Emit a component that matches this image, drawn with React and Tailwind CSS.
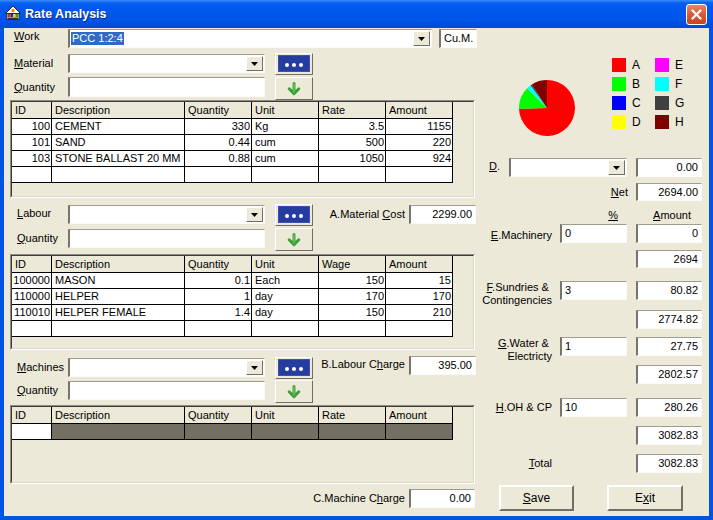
import React from "react";

const sunk =
  "bg-white border-t border-l-2 border-r border-b border-t-[#9f9d92] border-l-[#76746b] border-r-[#fbfbf8] border-b-[#fbfbf8]";
const raised =
  "bg-[#ECE9D8] border border-t-white border-l-white border-r-[#716f64] border-b-[#716f64]";

function U({ children }) {
  return <span className="underline underline-offset-[1px] decoration-1">{children}</span>;
}

function DropBtn() {
  return (
    <div className={`${raised} w-[17px] h-[15px] flex items-center justify-center shrink-0`}>
      <svg width="7" height="4" viewBox="0 0 7 4">
        <path d="M0 0h7L3.5 4z" fill="#000" />
      </svg>
    </div>
  );
}

function DotsBtn() {
  return (
    <div className={`${raised} w-[38px] h-[22px] flex items-center justify-center shrink-0`}>
      <div className="w-[32px] h-[17px] bg-[#263c9f] border border-[#3a52b8] flex items-center justify-center gap-[3px] pt-[3px]">
        <div className="w-[4px] h-[4px] rounded-full bg-white" />
        <div className="w-[4px] h-[4px] rounded-full bg-white" />
        <div className="w-[4px] h-[4px] rounded-full bg-white" />
      </div>
    </div>
  );
}

function ArrowBtn() {
  return (
    <div className={`${raised} w-[38px] h-[23px] flex items-center justify-center shrink-0`}>
      <svg width="14" height="14" viewBox="0 0 14 14">
        <path d="M7 1.5V11.5M2.2 6.8L7 11.6L11.8 6.8" fill="none" stroke="#3f9f3a" strokeWidth="3" strokeLinecap="round" strokeLinejoin="round" />
        <path d="M7 2V10" fill="none" stroke="#7ccf6f" strokeWidth="1" strokeLinecap="round" />
      </svg>
    </div>
  );
}

const COLS = "grid grid-cols-[40px_133px_67px_67px_67px_67px] w-[441px]";

function Grid({ headers, rows, boxH, dark }) {
  return (
    <div className={`ml-[6px] w-[465px] ${boxH} border border-t-[#8d8b82] border-l-[#8d8b82] border-r-white border-b-white`}>
      <div className="w-full h-full border border-t-[#3c3c3c] border-l-[#3c3c3c] border-r-[#dcd9cc] border-b-[#dcd9cc]">
        <div className={COLS}>
          {headers.map((h) => (
            <div key={h} className="h-[17px] border-r border-b border-black pl-[3px] leading-[16px]">
              {h}
            </div>
          ))}
          {rows.map((r, i) =>
            r.map((c, j) => {
              const right = j === 0 || j === 2 || j === 4 || j === 5;
              const bg = dark ? (j === 0 ? "bg-white" : "bg-[#736f63]") : "bg-white";
              return (
                <div
                  key={i + "-" + j}
                  className={`h-[16px] border-r border-b border-black leading-[15px] whitespace-nowrap overflow-hidden ${bg} ${
                    right ? "text-right pr-[1px]" : "pl-[3px]"
                  }`}
                >
                  {c}
                </div>
              );
            })
          )}
        </div>
      </div>
    </div>
  );
}

function Combo({ cls }) {
  return (
    <div className={`${sunk} ${cls} h-[19px] flex items-center justify-end pr-[1px] shrink-0`}>
      <DropBtn />
    </div>
  );
}

function Field({ cls, children, left }) {
  return (
    <div
      className={`${sunk} ${cls} flex items-center shrink-0 ${left ? "justify-start pl-[3px]" : "justify-end pr-[3px]"}`}
    >
      {children}
    </div>
  );
}

function Pie() {
  const vals = [2299, 395, 0, 0, 0, 80.82, 27.75, 280.26];
  const cols = ["#ff0000", "#00ff00", "#0000ff", "#ffff00", "#ff00ff", "#00ffff", "#404040", "#800000"];
  const total = vals.reduce((a, b) => a + b, 0);
  const r = 28,
    cx = 28,
    cy = 28;
  let a = -Math.PI / 2;
  const paths = [];
  vals.forEach((v, i) => {
    if (!v) return;
    const da = (v / total) * Math.PI * 2;
    const a2 = a + da;
    const x1 = cx + r * Math.cos(a),
      y1 = cy + r * Math.sin(a);
    const x2 = cx + r * Math.cos(a2),
      y2 = cy + r * Math.sin(a2);
    const large = da > Math.PI ? 1 : 0;
    paths.push(
      <path key={i} d={`M${cx} ${cy}L${x1} ${y1}A${r} ${r} 0 ${large} 1 ${x2} ${y2}Z`} fill={cols[i]} />
    );
    a = a2;
  });
  return (
    <svg width="56" height="56" viewBox="0 0 56 56" className="shrink-0">
      {paths}
    </svg>
  );
}

const legend1 = [
  ["A", "bg-[#ff0000]"],
  ["B", "bg-[#00ff00]"],
  ["C", "bg-[#0000ff]"],
  ["D", "bg-[#ffff00]"],
];
const legend2 = [
  ["E", "bg-[#ff00ff]"],
  ["F", "bg-[#00ffff]"],
  ["G", "bg-[#404040]"],
  ["H", "bg-[#800000]"],
];

function LegendCol({ items }) {
  return (
    <div className="flex flex-col gap-[5px] w-[43px]">
      {items.map(([l, c]) => (
        <div key={l} className="flex items-center h-[14px]">
          <div className={`w-[14px] h-[14px] ${c}`} />
          <span className="ml-[6px] text-[12px] leading-[14px]">{l}</span>
        </div>
      ))}
    </div>
  );
}

function HouseIcon() {
  return (
    <svg width="18" height="18" viewBox="0 0 18 18" className="shrink-0">
      <polygon points="9,1 1.5,8.5 16.5,8.5" fill="#fff" stroke="#2a2a2a" strokeWidth="1" />
      <rect x="3" y="8.5" width="12" height="6" fill="#fff" stroke="#2a2a2a" strokeWidth="1" />
      <rect x="4" y="9" width="2.5" height="3" fill="#e22" />
      <rect x="6.5" y="9" width="2.5" height="3" fill="#22c" />
      <rect x="9" y="9" width="2.5" height="3" fill="#fc0" />
      <rect x="11.5" y="9" width="2.5" height="3" fill="#2a2" />
      <rect x="4" y="12.5" width="10" height="1.5" fill="#333" />
      <rect x="7.5" y="4" width="3" height="3" fill="#f80" />
    </svg>
  );
}

export default function App() {
  const grid1 = [
    ["100", "CEMENT", "330", "Kg", "3.5", "1155"],
    ["101", "SAND", "0.44", "cum", "500", "220"],
    ["103", "STONE BALLAST 20 MM", "0.88", "cum", "1050", "924"],
    ["", "", "", "", "", ""],
  ];
  const grid2 = [
    ["100000", "MASON", "0.1", "Each", "150", "15"],
    ["110000", "HELPER", "1", "day", "170", "170"],
    ["110010", "HELPER FEMALE", "1.4", "day", "150", "210"],
    ["", "", "", "", "", ""],
  ];
  const grid3 = [["", "", "", "", "", ""]];

  return (
    <div className="w-[713px] h-[520px] flex flex-col bg-[#0054e3] font-['Liberation_Sans',Arial,sans-serif] text-[11px] text-black overflow-hidden">
      {/* Title bar */}
      <div className="h-[28px] shrink-0 flex items-center bg-[linear-gradient(180deg,#3a8dff_0%,#0a62f2_10%,#0058ee_25%,#0055e8_70%,#0049d6_100%)]">
        <div className="ml-[4px]">
          <HouseIcon />
        </div>
        <div className="ml-[3px] text-white font-bold text-[12.5px] [text-shadow:1px_1px_0_#0b2a8a]">Rate Analysis</div>
        <div className="flex-1" />
        <div className="mr-[6px] w-[21px] h-[21px] rounded-[3px] border border-white bg-[linear-gradient(180deg,#e8866a_0%,#d85a35_50%,#c7451f_100%)] flex items-center justify-center">
          <svg width="11" height="11" viewBox="0 0 11 11">
            <path d="M1.5 1.5L9.5 9.5M9.5 1.5L1.5 9.5" stroke="#fff" strokeWidth="2.2" strokeLinecap="round" />
          </svg>
        </div>
      </div>

      {/* Client */}
      <div className="flex-1 mx-[4px] mb-[4px] bg-[#ECE9D8] flex">
        {/* Left column */}
        <div className="w-[476px] flex flex-col shrink-0">
          {/* Work */}
          <div className="mt-[1px] h-[19px] flex items-start">
            <div className="w-[64px] pl-[10px] leading-[14px]">
              <U>W</U>ork
            </div>
            <div className={`${sunk} w-[364px] h-[19px] flex items-center pl-[1px] pr-[1px]`}>
              <span className="bg-[#316ac5] text-white px-[1px] leading-[13px]">PCC 1:2:4</span>
              <div className="flex-1" />
              <DropBtn />
            </div>
            <Field cls="ml-[7px] w-[38px] h-[19px]" left>
              Cu.M.
            </Field>
          </div>

          {/* Material */}
          <div className="mt-[6px] h-[19px] flex items-center">
            <div className="w-[64px] pl-[10px]">
              <U>M</U>aterial
            </div>
            <Combo cls="w-[197px]" />
            <div className="ml-[10px]">
              <DotsBtn />
            </div>
          </div>

          {/* Quantity */}
          <div className="mt-[4px] h-[20px] flex items-start">
            <div className="w-[64px] pl-[10px] leading-[20px]">
              <U>Q</U>uantity
            </div>
            <Field cls="w-[197px] h-[20px]" />
            <div className="ml-[10px]">
              <ArrowBtn />
            </div>
          </div>

          <div className="mt-[3px]">
            <Grid
              headers={["ID", "Description", "Quantity", "Unit", "Rate", "Amount"]}
              rows={grid1}
              boxH="h-[98px]"
            />
          </div>

          {/* Labour */}
          <div className="mt-[7px] h-[19px] flex items-center">
            <div className="w-[64px] pl-[13px] -mt-[3px]">
              <U>L</U>abour
            </div>
            <Combo cls="w-[197px]" />
            <div className="ml-[10px]">
              <DotsBtn />
            </div>
            <div className="flex-1 text-right pr-[4px]">
              A.Material <U>C</U>ost
            </div>
            <Field cls="w-[67px] h-[19px] mr-[4px]">2299.00</Field>
          </div>

          {/* Quantity */}
          <div className="mt-[5px] h-[19px] flex items-start">
            <div className="w-[64px] pl-[13px] leading-[19px]">
              <U>Q</U>uantity
            </div>
            <Field cls="w-[197px] h-[19px]" />
            <div className="ml-[10px] -mt-[1px]">
              <ArrowBtn />
            </div>
          </div>

          <div className="mt-[6px]">
            <Grid
              headers={["ID", "Description", "Quantity", "Unit", "Wage", "Amount"]}
              rows={grid2}
              boxH="h-[96px]"
            />
          </div>

          {/* Machines */}
          <div className="mt-[8px] h-[19px] flex items-center">
            <div className="w-[64px] pl-[13px]">
              <U>M</U>achines
            </div>
            <Combo cls="w-[197px]" />
            <div className="ml-[10px]">
              <DotsBtn />
            </div>
            <div className="flex-1 text-right pr-[4px] -mt-[6px]">
              B.Labour C<U>h</U>arge
            </div>
            <Field cls="w-[67px] h-[19px] mr-[4px] -mt-[4px]">395.00</Field>
          </div>

          {/* Quantity */}
          <div className="mt-[4px] h-[19px] flex items-start">
            <div className="w-[64px] pl-[13px] leading-[19px]">
              <U>Q</U>uantity
            </div>
            <Field cls="w-[197px] h-[19px]" />
            <div className="ml-[10px] -mt-[1px]">
              <ArrowBtn />
            </div>
          </div>

          <div className="mt-[5px]">
            <Grid
              headers={["ID", "Description", "Quantity", "Unit", "Rate", "Amount"]}
              rows={grid3}
              boxH="h-[79px]"
              dark
            />
          </div>

          {/* C Machine */}
          <div className="mt-[5px] h-[19px] flex items-center">
            <div className="flex-1 text-right pr-[4px]">
              C.Machine C<U>h</U>arge
            </div>
            <Field cls="w-[66px] h-[19px] mr-[5px]">0.00</Field>
          </div>
        </div>

        {/* Right column */}
        <div className="w-[229px] flex flex-col shrink-0">
          <div className="h-[130px] flex items-start shrink-0">
            <div className="ml-[39px] mt-[52px]">
              <Pie />
            </div>
            <div className="ml-[37px] mt-[30px] flex">
              <LegendCol items={legend1} />
              <LegendCol items={legend2} />
            </div>
          </div>

          {/* D */}
          <div className="h-[19px] flex items-center">
            <div className="w-[29px] pl-[9px] -mt-[2px]">
              <U>D</U>.
            </div>
            <Combo cls="w-[118px]" />
            <Field cls="ml-[9px] w-[66px] h-[19px]">0.00</Field>
          </div>

          {/* Net */}
          <div className="mt-[6px] h-[18px] flex items-center">
            <div className="w-[148px] text-right">
              <U>N</U>et
            </div>
            <Field cls="ml-[8px] w-[66px] h-[18px]">2694.00</Field>
          </div>

          {/* headers */}
          <div className="mt-[6px] h-[17px] flex items-center">
            <div className="w-[148px] text-right pr-[10px]">
              <U>%</U>
            </div>
            <div className="ml-[8px] w-[66px] text-center pl-[6px]">
              <U>A</U>mount
            </div>
          </div>

          {/* E */}
          <div className="h-[19px] flex items-center">
            <div className="w-[72px] text-right mt-[3px]">
              <U>E</U>.Machinery
            </div>
            <Field cls="ml-[8px] w-[67px] h-[19px]" left>
              0
            </Field>
            <Field cls="ml-[9px] w-[66px] h-[19px]">0</Field>
          </div>

          <div className="mt-[7px] h-[18px] flex items-center">
            <Field cls="ml-[156px] w-[66px] h-[18px]">2694</Field>
          </div>

          {/* F */}
          <div className="mt-[13px] h-[19px] flex items-start">
            <div className="w-[72px] text-right leading-[13px] whitespace-nowrap">
              <U>F</U>.Sundries &amp;&nbsp;
              <br />
              Contingencies
            </div>
            <Field cls="ml-[8px] w-[67px] h-[19px]" left>
              3
            </Field>
            <Field cls="ml-[9px] w-[66px] h-[19px]">80.82</Field>
          </div>

          <div className="mt-[10px] h-[19px] flex items-center">
            <Field cls="ml-[156px] w-[66px] h-[19px]">2774.82</Field>
          </div>

          {/* G */}
          <div className="mt-[8px] h-[19px] flex items-start">
            <div className="w-[72px] text-right leading-[13px] whitespace-nowrap">
              <U>G</U>.Water &amp;&nbsp;
              <br />
              Electricty
            </div>
            <Field cls="ml-[8px] w-[67px] h-[19px]" left>
              1
            </Field>
            <Field cls="ml-[9px] w-[66px] h-[19px]">27.75</Field>
          </div>

          <div className="mt-[9px] h-[19px] flex items-center">
            <Field cls="ml-[156px] w-[66px] h-[19px]">2802.57</Field>
          </div>

          {/* H */}
          <div className="mt-[14px] h-[19px] flex items-center">
            <div className="w-[72px] text-right">
              <U>H</U>.OH &amp; CP
            </div>
            <Field cls="ml-[8px] w-[67px] h-[19px]" left>
              10
            </Field>
            <Field cls="ml-[9px] w-[66px] h-[19px]">280.26</Field>
          </div>

          <div className="mt-[9px] h-[19px] flex items-center">
            <Field cls="ml-[156px] w-[66px] h-[19px]">3082.83</Field>
          </div>

          {/* Total */}
          <div className="mt-[9px] h-[19px] flex items-center">
            <div className="w-[72px] text-right">
              <U>T</U>otal
            </div>
            <Field cls="ml-[84px] w-[66px] h-[19px]">3082.83</Field>
          </div>

          {/* Buttons */}
          <div className="mt-[12px] h-[26px] flex items-stretch">
            <div className="ml-[19px] w-[75px] bg-[#ECE9D8] border-2 border-t-white border-l-white border-r-[#716f64] border-b-[#716f64] flex items-center justify-center text-[12px]">
              <U>S</U>ave
            </div>
            <div className="ml-[33px] w-[76px] bg-[#ECE9D8] border-2 border-t-white border-l-white border-r-[#716f64] border-b-[#716f64] flex items-center justify-center text-[12px]">
              E<U>x</U>it
            </div>
          </div>
        </div>
      </div>
    </div>
  );
}
